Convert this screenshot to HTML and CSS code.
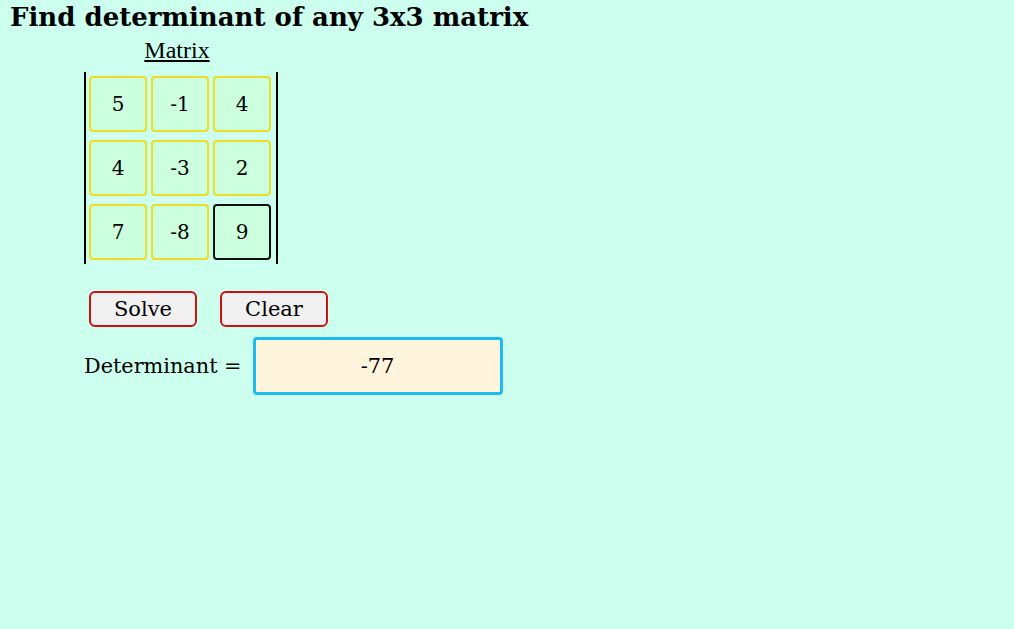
FILE: index.html
```html
<!DOCTYPE html>
<html>
<head>
<meta charset="utf-8">
<link rel="stylesheet" href="styles.css">
</head>
<body>
<h1 class="title">Find determinant of any 3x3 matrix</h1>
<div class="label-row"><span class="matrix-label">Matrix</span></div>
<div class="matrix">
  <div class="cell">5</div><div class="cell">-1</div><div class="cell">4</div>
  <div class="cell">4</div><div class="cell">-3</div><div class="cell">2</div>
  <div class="cell">7</div><div class="cell">-8</div><div class="cell focused">9</div>
</div>
<div class="buttons">
  <button class="btn">Solve</button>
  <button class="btn">Clear</button>
</div>
<div class="result-row">
  <span class="result-label">Determinant =</span>
  <div class="result">-77</div>
</div>
</body>
</html>
```
FILE: styles.css
```css
html, body {
  margin: 0;
  padding: 0;
  background: #ccffee;
  height: 100%;
}
body {
  padding: 0 10px;
  font-family: "DejaVu Serif", serif;
  color: #000;
}
.title {
  margin: 0;
  padding-top: 2px;
  font-size: 26px;
  line-height: 30px;
  font-weight: bold;
}
.label-row {
  width: 334px;
  text-align: center;
  margin-top: 6px;
}
.matrix-label {
  font-family: "Liberation Serif", serif;
  font-size: 24px;
  line-height: 24px;
  text-decoration: underline;
}
.matrix {
  margin-left: 74px;
  margin-top: 10px;
  width: 182px;
  display: grid;
  grid-template-columns: repeat(3, 58px);
  column-gap: 4px;
  row-gap: 8px;
  padding: 4px 5px 4px 3px;
  border-left: 2px solid #000;
  border-right: 2px solid #000;
}
.cell {
  box-sizing: border-box;
  height: 56px;
  background: #ccffdd;
  border: 2px solid #eedd22;
  border-radius: 4px;
  display: flex;
  align-items: center;
  justify-content: center;
  font-size: 20px;
}
.cell.focused {
  border-color: #111;
}
.buttons {
  display: flex;
  gap: 23px;
  margin-left: 79px;
  margin-top: 27px;
}
.btn {
  box-sizing: border-box;
  width: 108px;
  height: 36px;
  background: #f0f0f0;
  border: 2px solid #cc1111;
  border-radius: 6px;
  font-family: "DejaVu Serif", serif;
  font-size: 21px;
  color: #000;
  padding: 0;
}
.result-row {
  display: flex;
  align-items: center;
  margin-left: 74px;
  margin-top: 10px;
}
.result-label {
  font-size: 20.8px;
  margin-right: 11px;
}
.result {
  box-sizing: border-box;
  width: 250px;
  height: 58px;
  background: #fff5dd;
  border: 3px solid #1ebbee;
  border-radius: 4px;
  display: flex;
  align-items: center;
  justify-content: center;
  font-size: 21px;
}
```
